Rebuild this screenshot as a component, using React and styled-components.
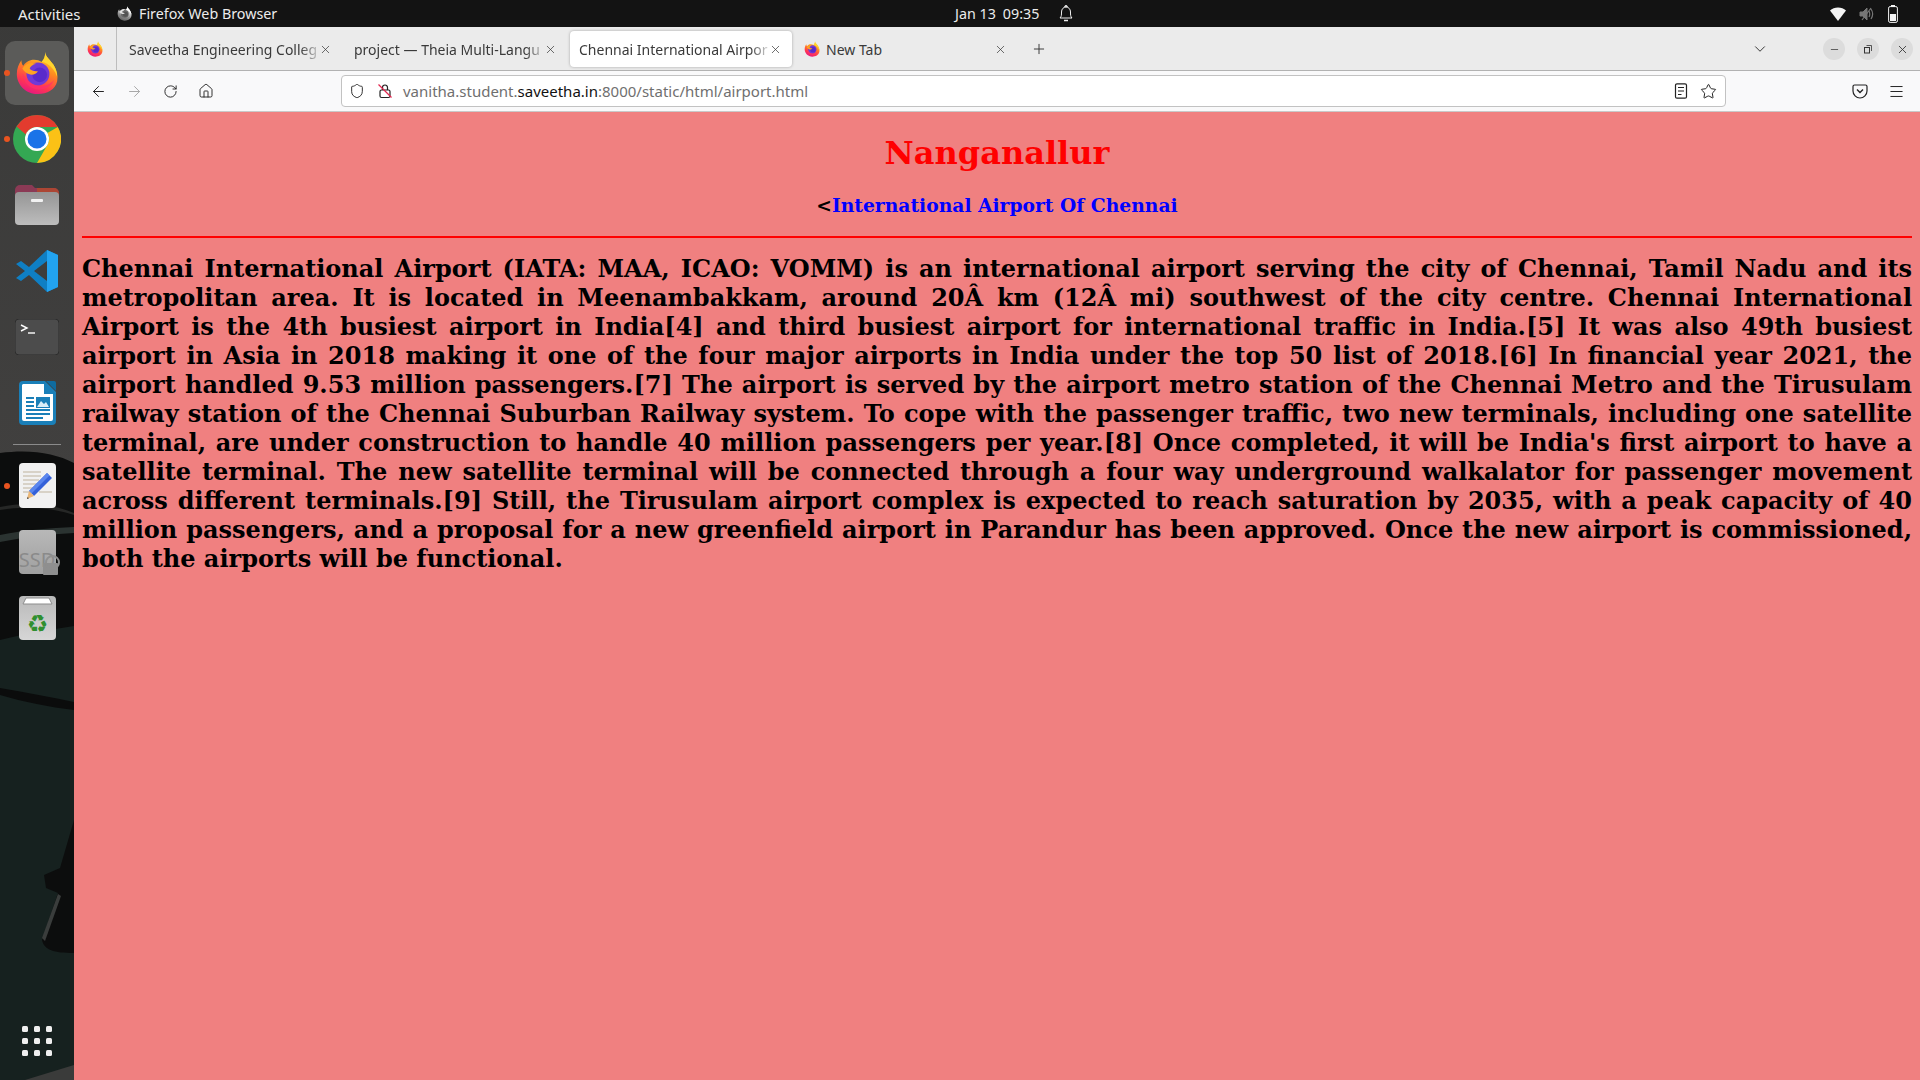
import React from "react";
import styled, { createGlobalStyle } from "styled-components";
import { ArrowLeft, ArrowRight, RotateCw, Home, Shield, Star, Menu, X, Plus, ChevronDown, Minus } from "lucide-react";

const tabs = [
  { title: "Saveetha Engineering Colleg" },
  { title: "project — Theia Multi-Langu" },
  { title: "Chennai International Airpor", active: true },
  { title: "New Tab", favicon: true, plain: true },
];

const paragraph =
  "Chennai International Airport (IATA: MAA, ICAO: VOMM) is an international airport serving the city of Chennai, Tamil Nadu and its metropolitan area. It is located in Meenambakkam, around 20Â km (12Â mi) southwest of the city centre. Chennai International Airport is the 4th busiest airport in India[4] and third busiest airport for international traffic in India.[5] It was also 49th busiest airport in Asia in 2018 making it one of the four major airports in India under the top 50 list of 2018.[6] In financial year 2021, the airport handled 9.53 million passengers.[7] The airport is served by the airport metro station of the Chennai Metro and the Tirusulam railway station of the Chennai Suburban Railway system. To cope with the passenger traffic, two new terminals, including one satellite terminal, are under construction to handle 40 million passengers per year.[8] Once completed, it will be India's first airport to have a satellite terminal. The new satellite terminal will be connected through a four way underground walkalator for passenger movement across different terminals.[9] Still, the Tirusulam airport complex is expected to reach saturation by 2035, with a peak capacity of 40 million passengers, and a proposal for a new greenfield airport in Parandur has been approved. Once the new airport is commissioned, both the airports will be functional.";

function FirefoxLogo({ size = 16 }) {
  return (
    <svg width={size} height={size} viewBox="0 0 48 48">
      <defs>
        <linearGradient id="ffBody" x1="0.7" y1="0" x2="0.3" y2="1">
          <stop offset="0" stopColor="#ffd52e" />
          <stop offset="0.4" stopColor="#ff8a1f" />
          <stop offset="0.75" stopColor="#ff3750" />
          <stop offset="1" stopColor="#e31587" />
        </linearGradient>
      </defs>
      <path d="M33 1c0 5 5 8 9 14 4 6 5 12 4 18-2 9-11 14-21 14C12 47 2 37 2 25c0-6 2-11 5-15 0 3 1 5 2 6 2-3 5-5 8-6 5-1 9 0 12 2 3-3 4-7 4-11z" fill="url(#ffBody)" />
      <path d="M33 1c0 5 5 8 9 14 3 5 4 9 4 13-2-6-6-11-11-14-2-1-4-2-6-2 3-3 4-7 4-11z" fill="#ffd52e" />
      <circle cx="25" cy="25" r="12.5" fill="#7139d6" />
      <circle cx="27" cy="26" r="8" fill="#592acb" />
      <path d="M8 19c4-6 10-7 15-5-4 1-6 3-7 5 2 3 6 3 9 3-2 3-6 5-10 3-3-1-5-3-7-6z" fill="#ffa321" />
      <path d="M8 24c1 11 9 18 18 18 8 0 14-4 17-11-4 5-10 8-17 7-8-1-14-6-18-14z" fill="#ff2f6e" opacity="0.75" />
    </svg>
  );
}

function ChromeLogo() {
  return (
    <svg width="48" height="48" viewBox="0 0 48 48">
      <circle cx="24" cy="24" r="24" fill="#34a853" />
      <path d="M24 0a24 24 0 0 1 20.800 12H24a12 12 0 0 0-11.200 7.600L3.600 11.500A24 24 0 0 1 24 0z" fill="#e33b2e" />
      <path d="M44.800 12A24 24 0 0 1 24 48l10.400-18A12 12 0 0 0 34.400 18z" fill="#fbc116" />
      <circle cx="24" cy="24" r="12" fill="#fff" />
      <circle cx="24" cy="24" r="9.500" fill="#1a73e8" />
    </svg>
  );
}

function FilesIcon() {
  return (
    <svg width="44" height="40" viewBox="0 0 44 40">
      <defs>
        <linearGradient id="filesBody" x1="0" y1="0" x2="0" y2="1">
          <stop offset="0" stopColor="#959595" />
          <stop offset="1" stopColor="#bdbdbd" />
        </linearGradient>
      </defs>
      <path d="M0 5a5 5 0 0 1 5-5h12l3 3h19a5 5 0 0 1 5 5v12H0z" fill="#8b3a55" />
      <path d="M22 3h17a5 5 0 0 1 5 5v10H22z" fill="#b2492f" opacity="0.85" />
      <rect y="7" width="44" height="33" rx="4" fill="url(#filesBody)" />
      <rect x="16" y="14" width="12" height="3" rx="1" fill="#f2f2f2" />
    </svg>
  );
}

function VsCodeIcon() {
  return (
    <svg width="42" height="42" viewBox="0 0 42 42">
      <path d="M31 0l11 5v32l-11 5-18-17-8 6-5-3 9-7-9-7 5-3 8 6z" fill="#0f7fc4" />
      <path d="M31 0l11 5v32l-11 5z" fill="#22a3f0" />
      <path d="M31 11L18 21l13 10z" fill="#3d3d3c" />
    </svg>
  );
}

function TerminalIcon() {
  return (
    <svg width="44" height="36" viewBox="0 0 44 36">
      <rect width="44" height="36" rx="4" fill="#4c4c4c" stroke="#2d2d2d" />
      <path d="M6 6l6 3-6 3" fill="none" stroke="#fff" strokeWidth="1.400" />
      <path d="M13 14h7" stroke="#fff" strokeWidth="1.400" />
    </svg>
  );
}

function WriterIcon() {
  return (
    <svg width="37" height="44" viewBox="0 0 37 44">
      <path d="M4 0h22l11 11v29a4 4 0 0 1-4 4H4a4 4 0 0 1-4-4V4a4 4 0 0 1 4-4z" fill="#1a7fb8" />
      <path d="M4 3h21v10h9v25a2 2 0 0 1-2 2H5a2 2 0 0 1-2-2V4z" fill="#fff" />
      <path d="M27 0h8a2 2 0 0 1 2 2v8z" fill="#0f6b9f" />
      <path d="M7 17h8M7 21h8M7 25h8M7 29h24M7 33h24M7 37h17" stroke="#1a7fb8" strokeWidth="1.800" />
      <rect x="17" y="16" width="14" height="11" fill="#1a7fb8" />
      <path d="M18 26l4-6 3 3 2-2 3 5z" fill="#d9edf7" />
    </svg>
  );
}

function TextEditorIcon() {
  return (
    <svg width="37" height="45" viewBox="0 0 37 45">
      <rect width="37" height="45" rx="4" fill="#f1f1f1" />
      <path d="M4 9h18M4 13h18M4 17h16M4 21h14M4 25h10M4 29h8M20 29h13" stroke="#cfc8b9" strokeWidth="1.600" />
      <path d="M28 10l5 5-18 18-5-5z" fill="#3461d9" />
      <path d="M28 10l2.500 2.500-18 18L10 28z" fill="#5a86ee" />
      <path d="M10 28l5 5-7 3z" fill="#eab676" />
      <path d="M8.600 34l-.6 2 2-.8z" fill="#333" />
    </svg>
  );
}

function TrashIcon() {
  return (
    <svg width="37" height="44" viewBox="0 0 37 44">
      <defs>
        <linearGradient id="trashBody" x1="0" y1="0" x2="0" y2="1">
          <stop offset="0" stopColor="#b9b9b9" />
          <stop offset="1" stopColor="#d6d6d6" />
        </linearGradient>
      </defs>
      <rect width="37" height="44" rx="4" fill="url(#trashBody)" />
      <path d="M4 8l3-6h23l3 6z" fill="#fff" stroke="#8d8d8d" />
      <text x="18.500" y="36" textAnchor="middle" fontFamily="DejaVu Sans" fontSize="24" fill="#2f8f2f">♻</text>
    </svg>
  );
}

function WifiIcon() {
  return (
    <svg width="16" height="14" viewBox="0 0 16 14">
      <path d="M0 3.500C2 1.500 5 .5 8 .5s6 1 8 3L8 14z" fill="#f4f4f4" />
    </svg>
  );
}

function MutedIcon() {
  return (
    <svg width="16" height="16" viewBox="0 0 16 16" fill="none" stroke="#777">
      <path d="M1 6h3l4-4v12l-4-4H1z" fill="#777" />
      <path d="M10 5c1 2 1 4 0 6M12 3c2 3 2 7 0 10M3 14L12 2" strokeWidth="1.200" />
    </svg>
  );
}

function BatteryIcon() {
  return (
    <svg width="10" height="18" viewBox="0 0 10 18">
      <rect x="3" y="0" width="4" height="2" fill="#f4f4f4" />
      <rect x="0.600" y="1.600" width="8.800" height="15.800" rx="1.500" fill="none" stroke="#f4f4f4" />
      <rect x="2" y="9" width="6" height="7" fill="#f4f4f4" />
    </svg>
  );
}

function BellIcon() {
  return (
    <svg width="14" height="18" viewBox="0 0 14 18" fill="none" stroke="#f0f0f0" strokeWidth="1">
      <path d="M1 13c1.500-1.500 1.500-3 1.500-6S4.500 2 7 2s4.500 2 4.500 5 0 4.500 1.500 6z" />
      <path d="M5.500 2L7 .5 8.500 2M5 15.500h4" strokeWidth="1.300" />
    </svg>
  );
}

function InsecureLockIcon() {
  return (
    <svg width="16" height="16" viewBox="0 0 16 16" fill="none" stroke="#222" strokeWidth="1.200">
      <rect x="3" y="7" width="10" height="7.500" rx="1.500" />
      <path d="M5.500 7V4.500a2.500 2.500 0 0 1 5 0V7" />
      <path d="M1.500 1.500l13 13" stroke="#e22850" strokeWidth="1.300" />
    </svg>
  );
}

function ReaderIcon() {
  return (
    <svg width="14" height="16" viewBox="0 0 14 16" fill="none" stroke="#222" strokeWidth="1.200">
      <rect x="1.500" y="0.800" width="11" height="14.400" rx="1.500" />
      <path d="M4 4.500h6M4 8h6M4 11.500h3.500" />
    </svg>
  );
}

function PocketIcon() {
  return (
    <svg width="16" height="16" viewBox="0 0 16 16" fill="none" stroke="#222" strokeWidth="1.200">
      <path d="M2.500 2h11A1.500 1.500 0 0 1 15 3.500V8a7 7 0 0 1-14 0V3.500A1.500 1.500 0 0 1 2.500 2z" />
      <path d="M5 6.500l3 3 3-3" strokeWidth="1.400" />
    </svg>
  );
}

function RestoreIcon() {
  return (
    <svg width="10" height="10" viewBox="0 0 10 10" fill="none" stroke="#333">
      <rect x="1.500" y="3.500" width="5" height="5.500" />
      <path d="M3.500 1.500h5v5.500" strokeWidth="0.800" />
    </svg>
  );
}

// wallpaper behind the dock, coordinates are screen pixels
function Wallpaper() {
  return (
    <WallpaperArt viewBox="0 0 74 1080" preserveAspectRatio="none">
      <defs>
        <linearGradient id="dockGrey" x1="0" y1="0" x2="0" y2="1">
          <stop offset="0" stopColor="#3a3a39" />
          <stop offset="1" stopColor="#41403f" />
        </linearGradient>
      </defs>
      <rect width="74" height="1080" fill="#16211f" />
      <rect width="74" height="480" fill="url(#dockGrey)" />
      <path d="M0 453c30-4 55 0 74 10v163c-25 4-50 8-74 14z" fill="#0c0d0d" />
      <path d="M0 507c25-5 50-4 74 6v2c-25-8-50-9-74-5z" fill="#262726" />
      <path d="M0 535c25-5 50-7 74-8v6c-25 1-50 4-74 9z" fill="#2b3331" />
      <path d="M0 688c25 4 50 9 74 14v8c-25-3-50-8-74-15z" fill="#0b0c0c" />
      <path d="M74 820L60 868l-16 7 2 13 12 5-16 47c2 10 12 13 32 13z" fill="#0c0d0d" />
      <path d="M58 894L42 938l3 3 16-45z" fill="#3a3d3c" />
      <path d="M25 1080l49-15v15z" fill="#3a3b3a" />
    </WallpaperArt>
  );
}

export default function App() {
  return (
    <>
      <GlobalStyle />
      <Screen>
        <TopBar>
          <Activities>Activities</Activities>
          <AppName>
            <FirefoxMono>
              <FirefoxLogo size={15} />
            </FirefoxMono>
            Firefox Web Browser
          </AppName>
          <Clock>
            <span>Jan 13</span>
            <span>09:35</span>
          </Clock>
          <BellSlot>
            <BellIcon />
          </BellSlot>
          <StatusIcons>
            <WifiIcon />
            <MutedIcon />
            <BatteryIcon />
          </StatusIcons>
        </TopBar>

        <Main>
          <Dock>
            <Wallpaper />
            <DockItem $h={64} $top={14} $active $dot>
              <FirefoxLogo size={44} />
            </DockItem>
            <DockItem $h={48} $top={10} $dot>
              <ChromeLogo />
            </DockItem>
            <DockItem $h={40} $top={22}>
              <FilesIcon />
            </DockItem>
            <DockItem $h={42} $top={25}>
              <VsCodeIcon />
            </DockItem>
            <DockItem $h={36} $top={27}>
              <TerminalIcon />
            </DockItem>
            <DockItem $h={44} $top={26}>
              <WriterIcon />
            </DockItem>
            <DockSeparator />
            <DockItem $h={45} $top={18} $dot>
              <TextEditorIcon />
            </DockItem>
            <DockItem $h={44} $top={22}>
              <SsdIcon>
                SSD
                <SsdLock />
              </SsdIcon>
            </DockItem>
            <DockItem $h={44} $top={22}>
              <TrashIcon />
            </DockItem>
            <AppGrid>
              {Array.from({ length: 9 }).map((_, i) => (
                <GridDot key={i} />
              ))}
            </AppGrid>
          </Dock>

          <Browser>
            <TabBar>
              <PinnedTab>
                <FirefoxLogo size={16} />
              </PinnedTab>
              {tabs.map((t) => (
                <Tab key={t.title} $active={t.active}>
                  {t.favicon && <FirefoxLogo size={16} />}
                  <TabTitle $plain={t.plain}>{t.title}</TabTitle>
                  <X size={13} strokeWidth={1.3} color="#333" />
                </Tab>
              ))}
              <NewTabBtn>
                <Plus size={16} strokeWidth={1.4} color="#333" />
              </NewTabBtn>
              <TabBarSpacer />
              <ChevronDown size={18} strokeWidth={1.3} color="#333" />
              <WindowButtons>
                <WindowBtn>
                  <Minus size={11} strokeWidth={1.6} color="#333" />
                </WindowBtn>
                <WindowBtn>
                  <RestoreIcon />
                </WindowBtn>
                <WindowBtn>
                  <X size={13} strokeWidth={1.6} color="#333" />
                </WindowBtn>
              </WindowButtons>
            </TabBar>

            <Toolbar>
              <NavBtn>
                <ArrowLeft size={17} strokeWidth={1.4} color="#222" />
              </NavBtn>
              <NavBtn>
                <ArrowRight size={17} strokeWidth={1.4} color="#a8a8a8" />
              </NavBtn>
              <NavBtn>
                <RotateCw size={15} strokeWidth={1.5} color="#222" />
              </NavBtn>
              <NavBtn>
                <Home size={16} strokeWidth={1.4} color="#222" />
              </NavBtn>
              <UrlBar>
                <Shield size={16} strokeWidth={1.4} color="#222" />
                <InsecureLockIcon />
                <UrlText>
                  vanitha.student.<b>saveetha.in</b>:8000/static/html/airport.html
                </UrlText>
                <ReaderIcon />
                <Star size={17} strokeWidth={1.4} color="#222" />
              </UrlBar>
              <RightTools>
                <PocketIcon />
                <Menu size={17} strokeWidth={1.4} color="#222" />
              </RightTools>
            </Toolbar>

            <Page>
              <Heading>Nanganallur</Heading>
              <BackLine>
                &lt;<BackLink href="#">International Airport Of Chennai</BackLink>
              </BackLine>
              <Rule />
              <Body>{paragraph}</Body>
            </Page>
          </Browser>
        </Main>
      </Screen>
    </>
  );
}

/* ----------------------------- STYLED COMPONENTS ----------------------------- */

const GlobalStyle = createGlobalStyle`
  html, body { margin: 0; padding: 0; height: 100%; overflow: hidden; }
  #root { height: 100%; }
  * { box-sizing: border-box; }
`;

const Screen = styled.div`
  width: 1920px; height: 1080px; display: flex; flex-direction: column;
  font-family: "Noto Sans", sans-serif; overflow: hidden;
`;

const TopBar = styled.div`
  height: 27px; flex: none; background: #131313; color: #ececec;
  display: flex; align-items: center; padding-left: 18px;
`;

const Activities = styled.div`
  width: 99px; font-size: 15px;
`;

const AppName = styled.div`
  display: flex; align-items: center; gap: 7px; width: 838px; font-size: 14.3px;
`;

const FirefoxMono = styled.span`
  display: flex; filter: grayscale(1) brightness(1.3);
`;

const Clock = styled.div`
  display: flex; gap: 7px; width: 110px; font-size: 14.3px;
`;

const BellSlot = styled.div`
  display: flex; width: 771px; margin-left: -6px;
`;

const StatusIcons = styled.div`
  display: flex; align-items: center; gap: 13px;
`;

const Main = styled.div`
  flex: 1; display: flex; min-height: 0;
`;

const Dock = styled.div`
  width: 74px; flex: none; position: relative; display: flex; flex-direction: column;
  align-items: center; overflow: hidden;
`;

const WallpaperArt = styled.svg`
  position: absolute; left: 0; top: -27px; width: 74px; height: 1080px;
`;

const DockItem = styled.div`
  position: relative; flex: none; display: flex; align-items: center; justify-content: center;
  height: ${({ $h }) => $h}px; margin-top: ${({ $top }) => $top}px;
  width: 64px; border-radius: 10px;
  background: ${({ $active }) => ($active ? "#5b5b59" : "transparent")};

  &::before {
    content: ${({ $dot }) => ($dot ? '""' : "none")};
    position: absolute; left: -1px; top: 50%; width: 6px; height: 6px; margin-top: -3px;
    border-radius: 50%; background: #e95420;
  }
`;

const DockSeparator = styled.div`
  position: relative; flex: none; width: 48px; height: 1px; margin-top: 19px; background: #8b8b8b;
`;

const SsdIcon = styled.div`
  position: relative; width: 37px; height: 44px; border-radius: 4px;
  background: linear-gradient(#b8b8b8, #a0a0a0);
  color: #8a8a8a; font-size: 20px; line-height: 1;
  display: flex; align-items: flex-end; justify-content: center; padding-bottom: 4px;
`;

const SsdLock = styled.span`
  position: absolute; right: -2px; bottom: -1px; width: 15px; height: 12px; background: #8f8f8f; border-radius: 1px;

  &::before {
    content: ""; position: absolute; left: 2px; top: -8px; width: 11px; height: 11px;
    border: 2px solid #8f8f8f; border-radius: 50%;
  }
`;

const AppGrid = styled.div`
  position: absolute; left: 22px; bottom: 0; margin-bottom: 24px;
  display: grid; grid-template-columns: repeat(3, 6px); gap: 6px;
`;

const GridDot = styled.span`
  width: 6px; height: 6px; border-radius: 1.5px; background: #efefef;
`;

const Browser = styled.div`
  flex: 1; display: flex; flex-direction: column; min-width: 0;
`;

const TabBar = styled.div`
  height: 44px; flex: none; background: #ebebeb; border-bottom: 1px solid #b2b2b2;
  display: flex; align-items: center; padding: 4px 0 3px 0; color: #222;
`;

const PinnedTab = styled.div`
  width: 43px; height: 43px; margin: -4px 3px -3px 0; display: flex; align-items: center; justify-content: center;
  border-right: 1px solid #bdbdbd;
`;

const Tab = styled.div`
  width: 222px; height: 36px; flex: none; margin-right: 3px; padding: 0 10px 0 9px;
  display: flex; align-items: center; border-radius: 4px;
  background: ${({ $active }) => ($active ? "#fff" : "transparent")};
  box-shadow: ${({ $active }) => ($active ? "0 0 3px rgba(0,0,0,0.3)" : "none")};
`;

const TabTitle = styled.span`
  flex: 1; min-width: 0; white-space: nowrap; font-size: 14px; color: #3a3a3a;
  margin-left: ${({ $plain }) => ($plain ? "6px" : "0")};
  mask-image: ${({ $plain }) => ($plain ? "none" : "linear-gradient(to right, #000 90%, rgba(0,0,0,0.15))")};
`;

const NewTabBtn = styled.div`
  width: 18px; display: flex; justify-content: center; margin-left: 10px;
`;

const TabBarSpacer = styled.div`
  flex: 1;
`;

const WindowButtons = styled.div`
  display: flex; gap: 12px; margin: 0 7px 0 54px;
`;

const WindowBtn = styled.div`
  width: 22px; height: 22px; border-radius: 50%; background: #dcdcdc;
  display: flex; align-items: center; justify-content: center;
`;

const Toolbar = styled.div`
  height: 41px; flex: none; background: #f9f9fa; border-bottom: 1px solid #c9c9c9;
  display: flex; align-items: center; padding-left: 6px;
`;

const NavBtn = styled.div`
  width: 36px; display: flex; justify-content: center;
`;

const UrlBar = styled.div`
  width: 1385px; height: 32px; margin-left: 117px; background: #fff;
  border: 1px solid #c2c2c2; border-radius: 4px;
  display: flex; align-items: center; gap: 12px; padding: 0 8px 0 7px;
`;

const UrlText = styled.div`
  flex: 1; font-size: 15px; color: #6f6f6f; margin-left: -2px;
  b { font-weight: 400; color: #111; }
`;

const RightTools = styled.div`
  display: flex; align-items: center; gap: 20px; margin-left: 126px;
`;

const Page = styled.div`
  flex: 1; background: #f08080; padding: 8px; font-family: "DejaVu Serif", serif; font-weight: 700; color: #000; min-height: 0;
`;

const Heading = styled.h1`
  margin: 14px 0 0; text-align: center; color: #ff0000; font-size: 32px; line-height: 38px;
`;

const BackLine = styled.div`
  margin-top: 22px; text-align: center; font-size: 18.72px; line-height: 23px;
`;

const BackLink = styled.a`
  color: #0000ff; text-decoration: none;
`;

const Rule = styled.div`
  height: 2px; background: #ff0000; margin-top: 19px;
`;

const Body = styled.p`
  margin: 16px 0 0; font-size: 24px; line-height: 29px; text-align: justify;
`;
